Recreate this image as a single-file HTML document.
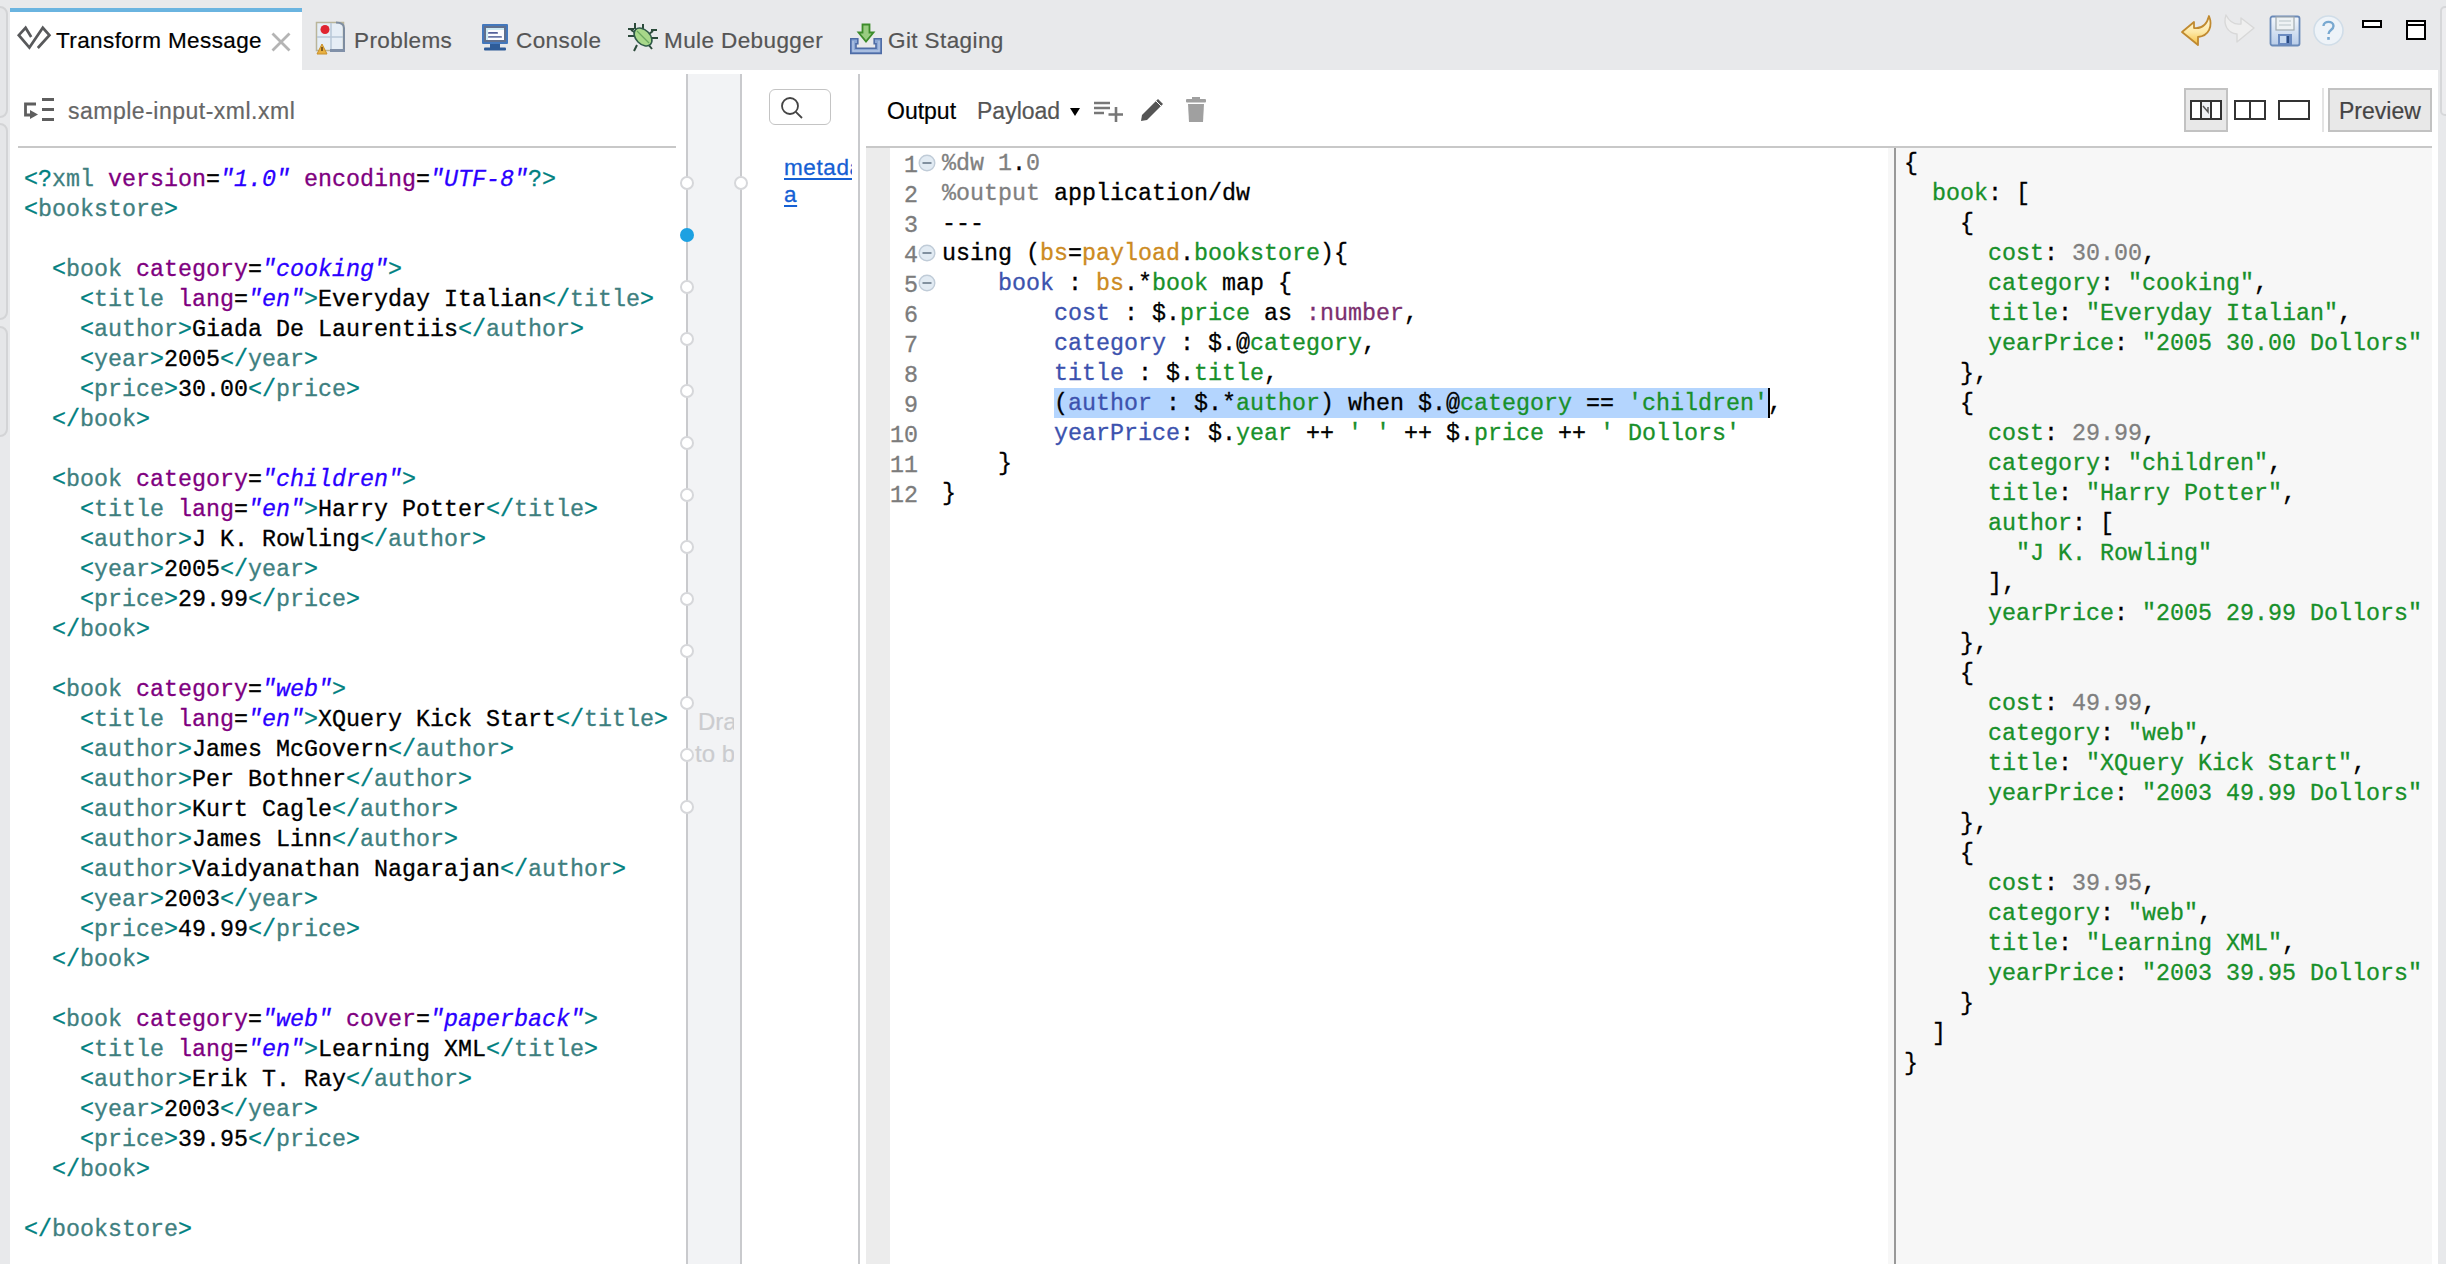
<!DOCTYPE html>
<html><head><meta charset="utf-8">
<style>
*{margin:0;padding:0;box-sizing:border-box}
html,body{width:2446px;height:1264px;overflow:hidden;background:#fff;position:relative;font-family:"Liberation Sans",sans-serif;-webkit-text-stroke:0.2px currentColor}
.abs{position:absolute}
#tabbar{left:0;top:0;width:2446px;height:70px;background:#e8e9eb}
.tab{position:absolute;top:0;height:70px;font-size:22.5px;color:#555;white-space:nowrap}
.tab span{position:absolute;top:29px;line-height:24px;letter-spacing:0.4px}
#acttab{left:10px;top:8px;width:292px;height:62px;background:#fff;border-top:4px solid #6ab4e0}
#leftstrip{left:0;top:70px;width:10px;height:1194px;background:#e8e9eb}
#rightstrip{left:2438px;top:70px;width:8px;height:1194px;background:#e8e9eb}
.code{position:absolute;font-family:"Liberation Mono",monospace;font-size:23.33px;line-height:30px;white-space:pre;color:#000;-webkit-text-stroke:0.3px currentColor}
.tg{color:#3f7f7f}.td{color:#008080}.an{color:#7f007f}.av{color:#2a00ff;font-style:italic}
.k{color:#3c52ae}.o{color:#cc8a22}.g{color:#18902a}.p{color:#7b2f6f}.gr{color:#808080}
.jn{color:#7f7f7f}
.hl{background:linear-gradient(#b4d5fe 0,#b4d5fe 29px,transparent 29px);box-shadow:0 -1px 0 #b4d5fe;display:inline-block;height:30px;vertical-align:top}
.caret{display:inline-block;width:2px;height:30px;background:#000;vertical-align:top;margin-top:-1px;margin-right:-2px}
.vline{position:absolute;width:2px;background:#c9cacd}
.circ{position:absolute;width:14px;height:14px;border-radius:50%;background:#fff;border:2px solid #d6d7da}
</style></head><body>
<div id="tabbar" class="abs"></div>
<div id="acttab" class="abs"></div>
<div id="leftstrip" class="abs"></div>
<div class="abs" style="left:-12px;top:6px;width:20px;height:112px;border:2px solid #d3d4d6;border-radius:8px;background:#e5e6e8"></div><div class="abs" style="left:-12px;top:123px;width:20px;height:197px;border:2px solid #d3d4d6;border-radius:8px;background:#e5e6e8"></div><div class="abs" style="left:-12px;top:326px;width:20px;height:111px;border:2px solid #d3d4d6;border-radius:8px;background:#e5e6e8"></div>
<div id="rightstrip" class="abs"></div>
<div class="abs" style="left:2440px;top:6px;width:10px;height:110px;border:2px solid #d6d7d9;border-radius:6px;background:#ededef"></div>

<!-- tab icons -->
<svg class="abs" style="left:14px;top:20px" width="40" height="36" viewBox="14 20 40 36">
 <path d="M31.2,37 L25.6,27.8 L18.8,35.2 L29.4,47.6 L42.8,27.8 L49.4,35.2 L37.8,48" fill="none" stroke="#58595b" stroke-width="2.7" stroke-linejoin="miter" stroke-miterlimit="3"/>
</svg>
<div class="tab" style="left:56px;color:#000"><span>Transform Message</span></div>
<svg class="abs" style="left:270px;top:31px" width="22" height="22" viewBox="0 0 22 22"><path d="M2.5,2.5 L19.5,19.5 M19.5,2.5 L2.5,19.5" stroke="#b4b4b4" stroke-width="2.8"/></svg>

<svg class="abs" style="left:314px;top:20px" width="34" height="36" viewBox="0 0 34 36">
 <rect x="2.5" y="2.5" width="27" height="28" fill="#e6eef6" stroke="#b9b59a" stroke-width="1.5"/>
 <path d="M17,3 V30 M3,17 H29" stroke="#b8c8d8" stroke-width="1.5"/>
 <path d="M22,2.5 Q30,2.5 30,8 V30" fill="none" stroke="#7e8da0" stroke-width="2"/>
 <rect x="16" y="29" width="15" height="3" fill="#8090a8"/>
 <circle cx="11" cy="9.5" r="4.5" fill="#e02430"/>
 <path d="M3,34 L8,24 L13,34 Z" fill="#e8b040" stroke="#c8902a" stroke-width="1"/>
 <rect x="7.3" y="27" width="1.4" height="4" fill="#5a3a10"/>
</svg>
<div class="tab" style="left:354px"><span>Problems</span></div>
<svg class="abs" style="left:476px;top:18px" width="40" height="38" viewBox="476 18 40 38">
 <rect x="482" y="24" width="26" height="20" rx="1" fill="#4478bc"/>
 <rect x="484" y="26" width="22" height="16" fill="#60708e"/>
 <rect x="486" y="28" width="18" height="12" fill="#fdfdff"/>
 <rect x="486" y="28" width="2" height="12" fill="#cdeaf4"/><rect x="486" y="28" width="18" height="2" fill="#cdeaf4"/>
 <rect x="488" y="32" width="10" height="1.8" rx="0.9" fill="#55609a"/>
 <rect x="488" y="36" width="14" height="1.8" rx="0.9" fill="#6a78a8"/>
 <rect x="490" y="44" width="10" height="4" fill="#2f5c98"/>
 <rect x="484" y="47.5" width="22" height="3" rx="1" fill="#2f5c98"/>
</svg>
<div class="tab" style="left:516px"><span>Console</span></div>
<svg class="abs" style="left:626px;top:21px" width="33" height="32" viewBox="0 0 33 32">
 <path d="M9,2 V8 M17,3 V8 M2,8 H8 M2,15 H8 M25,9 H31 M25,17 H32 M11,24 L8,30 M22,23 L26,28 M5,9 L10,12 M27,10 L23,13" stroke="#2b4a3a" stroke-width="2"/>
 <ellipse cx="17" cy="16" rx="7" ry="10.5" transform="rotate(-45 17 16)" fill="#a8d88a" stroke="#2f5a48" stroke-width="1.6"/>
 <path d="M11,10 L23,22" stroke="#6aa860" stroke-width="1.3"/>
</svg>
<div class="tab" style="left:664px"><span>Mule Debugger</span></div>
<svg class="abs" style="left:844px;top:18px" width="44" height="40" viewBox="844 18 44 40">
 <path d="M850.8,38.8 H857.8 V43.8 H856 V48.2 H876 V43.8 H874.2 V38.8 H881.2 V53.4 H850.8 Z" fill="#8aa6d4" stroke="#4e6ca6" stroke-width="1.6" stroke-linejoin="miter"/>
 <path d="M853,41 V51 H879 V41" fill="none" stroke="#b4c6e4" stroke-width="1.3"/>
 <path d="M862.5,24.5 H869.5 V32.5 H873.5 L866,41.5 L858.5,32.5 H862.5 Z" fill="#98cc80" stroke="#3c8c2a" stroke-width="1.8" stroke-linejoin="miter"/>
</svg>
<div class="tab" style="left:888px"><span>Git Staging</span></div>

<!-- right toolbar icons -->
<svg class="abs" style="left:2180px;top:14px" width="34" height="34" viewBox="0 0 34 34">
 <defs><linearGradient id="ug" x1="0" y1="0" x2="0" y2="1"><stop offset="0" stop-color="#fff8e0"/><stop offset="0.55" stop-color="#fde9a8"/><stop offset="1" stop-color="#f6c040"/></linearGradient><linearGradient id="sg" x1="0" y1="0" x2="0" y2="1"><stop offset="0" stop-color="#f4f8fc"/><stop offset="1" stop-color="#b8cce8"/></linearGradient></defs><path d="M29,2 C33,12 29,22 18,23 L18,31 L2,18 L14,8 L14,14 C22,15 27,10 29,2 Z" fill="url(#ug)" stroke="#c08a30" stroke-width="1.8" stroke-linejoin="round"/>
</svg>
<svg class="abs" style="left:2222px;top:12px" width="34" height="34" viewBox="0 0 34 34">
 <path d="M4,3 C1,12 5,21 15,22 L15,30 L32,16 L19,6 L19,12 C12,13 7,9 4,3 Z" fill="#efefef" stroke="#d8d8d8" stroke-width="1.4" stroke-linejoin="round"/>
</svg>
<svg class="abs" style="left:2269px;top:15px" width="32" height="32" viewBox="0 0 32 32">
 <rect x="1.5" y="1.5" width="29" height="29" rx="2" fill="url(#sg)" stroke="#6a8ab8" stroke-width="1.8"/>
 <rect x="7" y="2" width="18" height="13" fill="#eef2f4" stroke="#a0aab0" stroke-width="1.2"/>
 <path d="M10,6 H22 M10,10 H22" stroke="#b8c4c8" stroke-width="1.2"/>
 <rect x="9" y="19" width="14" height="11" fill="#6a8ac0"/>
 <rect x="11" y="21" width="6" height="7" fill="#c8daf0"/>
 <rect x="18" y="21" width="2" height="7" fill="#2a4a80"/>
</svg>
<svg class="abs" style="left:2312px;top:14px" width="33" height="33" viewBox="0 0 33 33">
 <circle cx="16.5" cy="16.5" r="14.5" fill="#eef3f8" stroke="#d0dde8" stroke-width="1.6"/>
 <path d="M11.5,12 C11.5,6.5 21.5,6.5 21.5,12 C21.5,16 16.5,16 16.5,20" fill="none" stroke="#78a8d0" stroke-width="2.4"/>
 <rect x="15.2" y="23" width="2.6" height="2.8" fill="#78a8d0"/>
</svg>
<div class="abs" style="left:2362px;top:20px;width:20px;height:8px;border:2px solid #000;background:#fff"></div>
<div class="abs" style="left:2406px;top:20px;width:20px;height:20px;border:2px solid #000;background:#fff"><div style="position:absolute;left:0;top:2px;width:16px;height:2px;background:#000"></div></div>

<!-- left header -->
<svg class="abs" style="left:22px;top:96px" width="34" height="28" viewBox="22 96 34 28">
 <path d="M36,104 H25.5 V115 H31" fill="none" stroke="#5e5e5e" stroke-width="2.8"/>
 <path d="M30,110 L38,114.5 L30,119 Z" fill="#5e5e5e"/>
 <path d="M42,99.5 H54 M42,109.5 H54 M42,119.5 H54" stroke="#5e5e5e" stroke-width="2.8"/>
</svg>
<div class="abs" style="left:68px;top:98px;font-size:23px;color:#666;line-height:26px;letter-spacing:0.5px">sample-input-xml.xml</div>
<div class="abs" style="left:18px;top:146px;width:658px;height:2px;background:#c8c8c8"></div>

<div class="code" style="left:24px;top:165px"><span class="td">&lt;?</span><span class="tg">xml</span> <span class="an">version</span>=<span class="av">"1.0"</span> <span class="an">encoding</span>=<span class="av">"UTF-8"</span><span class="td">?&gt;</span>
<span class="td">&lt;</span><span class="tg">bookstore</span><span class="td">&gt;</span>

  <span class="td">&lt;</span><span class="tg">book</span> <span class="an">category</span>=<span class="av">"cooking"</span><span class="td">&gt;</span>
    <span class="td">&lt;</span><span class="tg">title</span> <span class="an">lang</span>=<span class="av">"en"</span><span class="td">&gt;</span>Everyday Italian<span class="td">&lt;/</span><span class="tg">title</span><span class="td">&gt;</span>
    <span class="td">&lt;</span><span class="tg">author</span><span class="td">&gt;</span>Giada De Laurentiis<span class="td">&lt;/</span><span class="tg">author</span><span class="td">&gt;</span>
    <span class="td">&lt;</span><span class="tg">year</span><span class="td">&gt;</span>2005<span class="td">&lt;/</span><span class="tg">year</span><span class="td">&gt;</span>
    <span class="td">&lt;</span><span class="tg">price</span><span class="td">&gt;</span>30.00<span class="td">&lt;/</span><span class="tg">price</span><span class="td">&gt;</span>
  <span class="td">&lt;/</span><span class="tg">book</span><span class="td">&gt;</span>

  <span class="td">&lt;</span><span class="tg">book</span> <span class="an">category</span>=<span class="av">"children"</span><span class="td">&gt;</span>
    <span class="td">&lt;</span><span class="tg">title</span> <span class="an">lang</span>=<span class="av">"en"</span><span class="td">&gt;</span>Harry Potter<span class="td">&lt;/</span><span class="tg">title</span><span class="td">&gt;</span>
    <span class="td">&lt;</span><span class="tg">author</span><span class="td">&gt;</span>J K. Rowling<span class="td">&lt;/</span><span class="tg">author</span><span class="td">&gt;</span>
    <span class="td">&lt;</span><span class="tg">year</span><span class="td">&gt;</span>2005<span class="td">&lt;/</span><span class="tg">year</span><span class="td">&gt;</span>
    <span class="td">&lt;</span><span class="tg">price</span><span class="td">&gt;</span>29.99<span class="td">&lt;/</span><span class="tg">price</span><span class="td">&gt;</span>
  <span class="td">&lt;/</span><span class="tg">book</span><span class="td">&gt;</span>

  <span class="td">&lt;</span><span class="tg">book</span> <span class="an">category</span>=<span class="av">"web"</span><span class="td">&gt;</span>
    <span class="td">&lt;</span><span class="tg">title</span> <span class="an">lang</span>=<span class="av">"en"</span><span class="td">&gt;</span>XQuery Kick Start<span class="td">&lt;/</span><span class="tg">title</span><span class="td">&gt;</span>
    <span class="td">&lt;</span><span class="tg">author</span><span class="td">&gt;</span>James McGovern<span class="td">&lt;/</span><span class="tg">author</span><span class="td">&gt;</span>
    <span class="td">&lt;</span><span class="tg">author</span><span class="td">&gt;</span>Per Bothner<span class="td">&lt;/</span><span class="tg">author</span><span class="td">&gt;</span>
    <span class="td">&lt;</span><span class="tg">author</span><span class="td">&gt;</span>Kurt Cagle<span class="td">&lt;/</span><span class="tg">author</span><span class="td">&gt;</span>
    <span class="td">&lt;</span><span class="tg">author</span><span class="td">&gt;</span>James Linn<span class="td">&lt;/</span><span class="tg">author</span><span class="td">&gt;</span>
    <span class="td">&lt;</span><span class="tg">author</span><span class="td">&gt;</span>Vaidyanathan Nagarajan<span class="td">&lt;/</span><span class="tg">author</span><span class="td">&gt;</span>
    <span class="td">&lt;</span><span class="tg">year</span><span class="td">&gt;</span>2003<span class="td">&lt;/</span><span class="tg">year</span><span class="td">&gt;</span>
    <span class="td">&lt;</span><span class="tg">price</span><span class="td">&gt;</span>49.99<span class="td">&lt;/</span><span class="tg">price</span><span class="td">&gt;</span>
  <span class="td">&lt;/</span><span class="tg">book</span><span class="td">&gt;</span>

  <span class="td">&lt;</span><span class="tg">book</span> <span class="an">category</span>=<span class="av">"web"</span> <span class="an">cover</span>=<span class="av">"paperback"</span><span class="td">&gt;</span>
    <span class="td">&lt;</span><span class="tg">title</span> <span class="an">lang</span>=<span class="av">"en"</span><span class="td">&gt;</span>Learning XML<span class="td">&lt;/</span><span class="tg">title</span><span class="td">&gt;</span>
    <span class="td">&lt;</span><span class="tg">author</span><span class="td">&gt;</span>Erik T. Ray<span class="td">&lt;/</span><span class="tg">author</span><span class="td">&gt;</span>
    <span class="td">&lt;</span><span class="tg">year</span><span class="td">&gt;</span>2003<span class="td">&lt;/</span><span class="tg">year</span><span class="td">&gt;</span>
    <span class="td">&lt;</span><span class="tg">price</span><span class="td">&gt;</span>39.95<span class="td">&lt;/</span><span class="tg">price</span><span class="td">&gt;</span>
  <span class="td">&lt;/</span><span class="tg">book</span><span class="td">&gt;</span>

<span class="td">&lt;/</span><span class="tg">bookstore</span><span class="td">&gt;</span></div>

<!-- mapping column -->
<div class="abs" style="left:688px;top:74px;width:52px;height:1190px;background:#f2f3f5"></div>
<div class="vline" style="left:686px;top:74px;height:1190px"></div>
<div class="vline" style="left:740px;top:74px;height:1190px"></div>
<div class="vline" style="left:858px;top:74px;height:1190px"></div>
<div class="abs" style="left:688px;top:700px;width:46px;height:80px;overflow:hidden;color:#cbcccf;font-size:24px;line-height:32px;white-space:nowrap">
 <div style="position:absolute;left:10px;top:6px">Drag</div>
 <div style="position:absolute;left:7px;top:38px">to b</div>
</div>
<div class="circ" style="left:680px;top:176px"></div><div class="circ" style="left:680px;top:280px"></div><div class="circ" style="left:680px;top:332px"></div><div class="circ" style="left:680px;top:384px"></div><div class="circ" style="left:680px;top:436px"></div><div class="circ" style="left:680px;top:488px"></div><div class="circ" style="left:680px;top:540px"></div><div class="circ" style="left:680px;top:592px"></div><div class="circ" style="left:680px;top:644px"></div><div class="circ" style="left:680px;top:696px"></div><div class="circ" style="left:680px;top:748px"></div><div class="circ" style="left:680px;top:800px"></div>
<div class="circ" style="left:734px;top:176px"></div>
<div class="abs" style="left:680px;top:228px;width:14px;height:14px;border-radius:50%;background:#1da1e2"></div>
<!-- search -->
<div class="abs" style="left:769px;top:89px;width:62px;height:36px;border:1.5px solid #c4c4c4;border-radius:6px;background:#fff"></div>
<svg class="abs" style="left:778px;top:94px" width="28" height="28" viewBox="0 0 28 28"><circle cx="12" cy="12" r="8" fill="none" stroke="#444" stroke-width="1.8"/><path d="M17.8,17.8 L24,24" stroke="#444" stroke-width="1.8"/></svg>
<div class="abs" style="left:784px;top:154px;width:68px;height:64px;overflow:hidden;font-size:22.5px;line-height:27px;color:#1560d4;letter-spacing:0.6px;-webkit-text-stroke:0.3px currentColor">
 <div style="white-space:nowrap"><span style="text-decoration:underline;text-decoration-thickness:2px;text-underline-offset:3px">metadata</span></div>
 <div><span style="text-decoration:underline;text-decoration-thickness:2px;text-underline-offset:3px">a</span></div>
</div>

<!-- output header -->
<div class="abs" style="left:887px;top:98px;font-size:23px;color:#000;line-height:26px">Output</div>
<div class="abs" style="left:977px;top:98px;font-size:23px;color:#555;line-height:26px">Payload</div>
<svg class="abs" style="left:1069px;top:106px" width="12" height="12" viewBox="0 0 12 12"><path d="M1,2 H11 L6,10 Z" fill="#000"/></svg>
<svg class="abs" style="left:1092px;top:98px" width="32" height="26" viewBox="0 0 32 26"><path d="M2,5 H18 M2,10 H18 M2,15 H12" stroke="#777" stroke-width="2.6"/><path d="M24,9 V24 M16.5,16.5 H31" stroke="#777" stroke-width="2.6"/></svg>
<svg class="abs" style="left:1137px;top:96px" width="30" height="28" viewBox="0 0 30 28"><path d="M4,25 L5,19 L21,3 L26,8 L10,24 Z" fill="#555"/><path d="M19,5 L24,10" stroke="#fff" stroke-width="1"/></svg>
<svg class="abs" style="left:1184px;top:96px" width="24" height="28" viewBox="0 0 24 28"><rect x="2" y="3" width="20" height="3.5" rx="1" fill="#a0a0a0"/><rect x="8" y="1" width="8" height="3" fill="#a0a0a0"/><path d="M4,8 H20 L19,26 H5 Z" fill="#a0a0a0"/></svg>
<!-- layout buttons -->
<div class="abs" style="left:2184px;top:88px;width:44px;height:44px;border:2px solid #c2c2c2;background:#e8e8e8"></div>
<svg class="abs" style="left:2188px;top:98px" width="36" height="24" viewBox="0 0 36 24"><rect x="3" y="3" width="30" height="18" fill="#fff" stroke="#333" stroke-width="2"/><rect x="13" y="3" width="10" height="18" fill="#eef0f4"/><path d="M13,3 V21 M23,3 V21" stroke="#333" stroke-width="2"/><path d="M15,8 L20,14 V9" fill="none" stroke="#555" stroke-width="1.5"/><rect x="3" y="3" width="30" height="18" fill="none" stroke="#333" stroke-width="2"/></svg>
<svg class="abs" style="left:2232px;top:98px" width="36" height="24" viewBox="0 0 36 24"><rect x="3" y="3" width="30" height="18" fill="none" stroke="#333" stroke-width="2"/><path d="M18,3 V21" stroke="#333" stroke-width="2"/></svg>
<svg class="abs" style="left:2276px;top:98px" width="36" height="24" viewBox="0 0 36 24"><rect x="3" y="3" width="30" height="18" fill="none" stroke="#333" stroke-width="2"/></svg>
<div class="abs" style="left:2322px;top:88px;width:2px;height:44px;background:#e4e4e4"></div>
<div class="abs" style="left:2328px;top:88px;width:104px;height:44px;border:2px solid #c2c2c2;background:#e8e8e8"></div>
<div class="abs" style="left:2339px;top:98px;font-size:23px;color:#444;line-height:26px">Preview</div>
<div class="abs" style="left:866px;top:146px;width:1566px;height:2px;background:#c8c8c8"></div>

<!-- gutter -->
<div class="abs" style="left:866px;top:148px;width:24px;height:1116px;background:#ececec"></div>
<!-- folds -->
<svg class="abs" style="left:918px;top:154px" width="18" height="18" viewBox="0 0 18 18"><circle cx="9" cy="9" r="7.8" fill="#e2ebf3" stroke="#c0ccd8" stroke-width="1.4"/><path d="M4.5,9 H13.5" stroke="#6a7a8a" stroke-width="1.6"/></svg><svg class="abs" style="left:918px;top:244px" width="18" height="18" viewBox="0 0 18 18"><circle cx="9" cy="9" r="7.8" fill="#e2ebf3" stroke="#c0ccd8" stroke-width="1.4"/><path d="M4.5,9 H13.5" stroke="#6a7a8a" stroke-width="1.6"/></svg><svg class="abs" style="left:918px;top:274px" width="18" height="18" viewBox="0 0 18 18"><circle cx="9" cy="9" r="7.8" fill="#e2ebf3" stroke="#c0ccd8" stroke-width="1.4"/><path d="M4.5,9 H13.5" stroke="#6a7a8a" stroke-width="1.6"/></svg>
<!-- json pane -->
<div class="abs" style="left:1888px;top:148px;width:544px;height:1116px;background:#f7f7f7"></div>
<div class="abs" style="left:1894px;top:148px;width:2px;height:1116px;background:#999"></div>


<!-- dw editor -->
<div class="code" style="left:876px;top:151px;width:42px;text-align:right;color:#7c7c7c">1
2
3
4
5
6
7
8
9
10
11
12</div>
<div class="code" style="left:942px;top:149px"><span class="gr">%dw 1</span>.<span class="gr">0</span>
<span class="gr">%output</span> application/dw
---
using (<span class="o">bs</span>=<span class="o">payload</span>.<span class="g">bookstore</span>){
    <span class="k">book</span> : <span class="o">bs</span>.*<span class="g">book</span> map {
        <span class="k">cost</span> : $.<span class="g">price</span> as <span class="p">:number</span>,
        <span class="k">category</span> : $.@<span class="g">category</span>,
        <span class="k">title</span> : $.<span class="g">title</span>,
        <span class="hl">(<span class="k">author</span> : $.*<span class="g">author</span>) when $.@<span class="g">category</span> == <span class="g">'children'</span></span><span class="caret"></span>,
        <span class="k">yearPrice</span>: $.<span class="g">year</span> ++ <span class="g">' '</span> ++ $.<span class="g">price</span> ++ <span class="g">' Dollors'</span>
    }
}</div>
<!-- json -->
<div class="code" style="left:1904px;top:149px">{
  <span class="g">book</span>: [
    {
      <span class="g">cost</span>: <span class="jn">30.00</span>,
      <span class="g">category</span>: <span class="g">"cooking"</span>,
      <span class="g">title</span>: <span class="g">"Everyday Italian"</span>,
      <span class="g">yearPrice</span>: <span class="g">"2005 30.00 Dollors"</span>
    },
    {
      <span class="g">cost</span>: <span class="jn">29.99</span>,
      <span class="g">category</span>: <span class="g">"children"</span>,
      <span class="g">title</span>: <span class="g">"Harry Potter"</span>,
      <span class="g">author</span>: [
        <span class="g">"J K. Rowling"</span>
      ],
      <span class="g">yearPrice</span>: <span class="g">"2005 29.99 Dollors"</span>
    },
    {
      <span class="g">cost</span>: <span class="jn">49.99</span>,
      <span class="g">category</span>: <span class="g">"web"</span>,
      <span class="g">title</span>: <span class="g">"XQuery Kick Start"</span>,
      <span class="g">yearPrice</span>: <span class="g">"2003 49.99 Dollors"</span>
    },
    {
      <span class="g">cost</span>: <span class="jn">39.95</span>,
      <span class="g">category</span>: <span class="g">"web"</span>,
      <span class="g">title</span>: <span class="g">"Learning XML"</span>,
      <span class="g">yearPrice</span>: <span class="g">"2003 39.95 Dollors"</span>
    }
  ]
}</div>
</body></html>
